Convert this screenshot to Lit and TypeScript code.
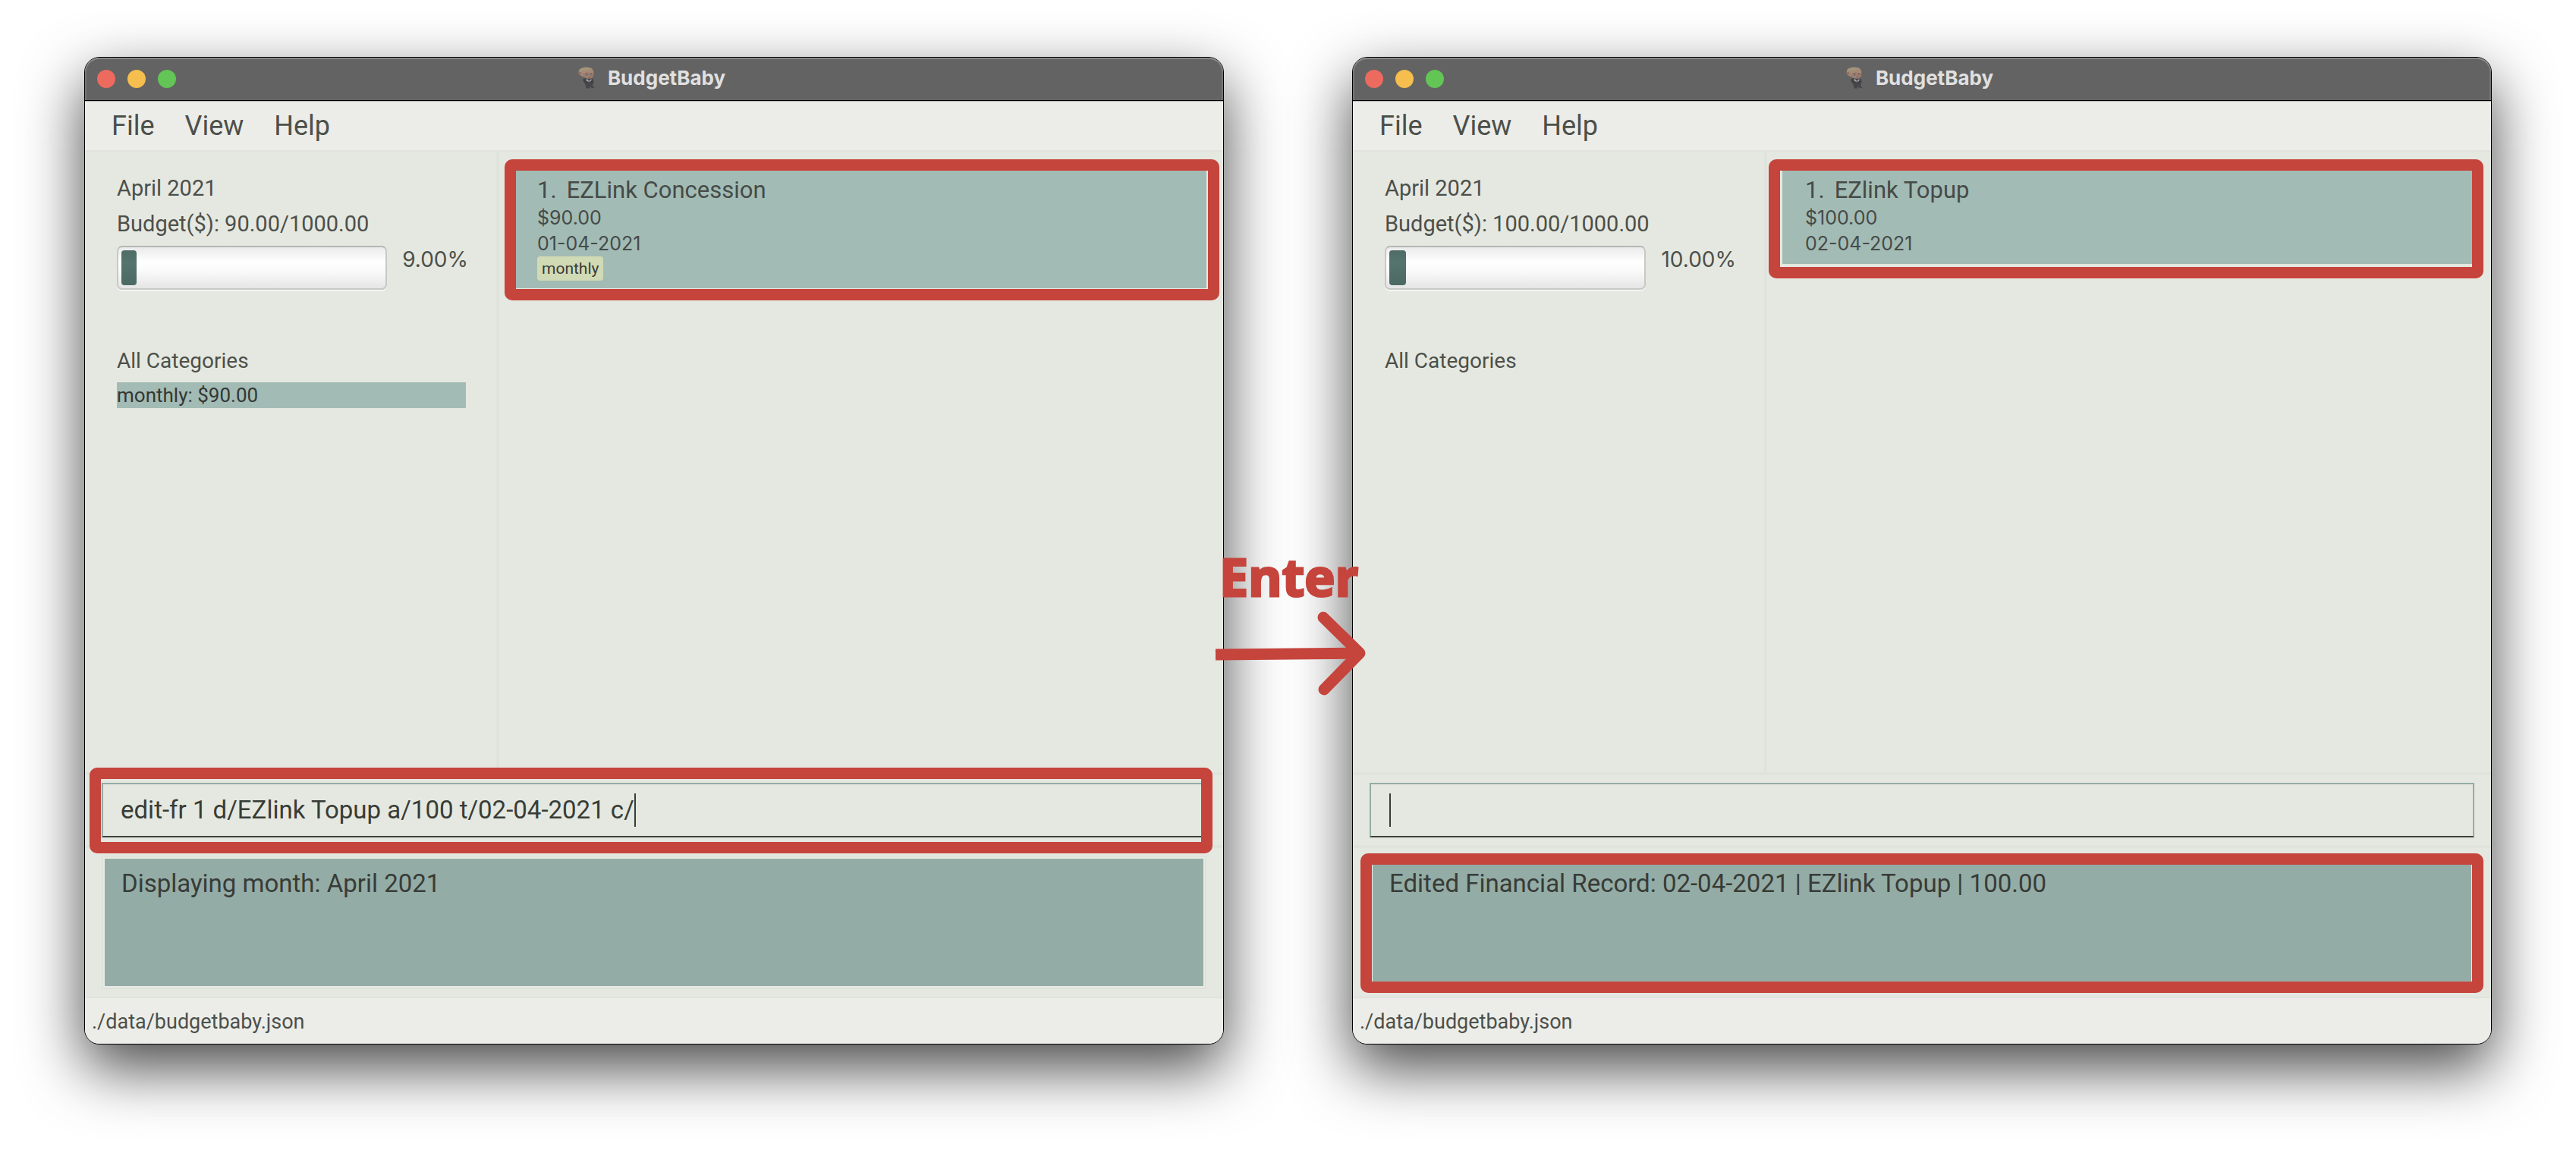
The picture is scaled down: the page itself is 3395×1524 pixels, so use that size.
import { LitElement, html, svg, css, nothing } from "lit";
import { customElement, property } from "lit/decorators.js";
import { classMap } from "lit/directives/class-map.js";
import { styleMap } from "lit/directives/style-map.js";

interface FinancialRecord {
  description: string;
  amount: string;
  date: string;
  tags: string[];
}

interface Snapshot {
  month: string;
  spent: number;
  budget: number;
  categories: { name: string; total: string }[];
  records: FinancialRecord[];
  command: string;
  result: string;
  file: string;
  marks: { record: "wide" | "shifted"; command: boolean; result: boolean };
}

const before: Snapshot = {
  month: "April 2021",
  spent: 90,
  budget: 1000,
  categories: [{ name: "monthly", total: "$90.00" }],
  records: [
    { description: "EZLink Concession", amount: "$90.00", date: "01-04-2021", tags: ["monthly"] },
  ],
  command: "edit-fr 1 d/EZlink Topup a/100 t/02-04-2021 c/",
  result: "Displaying month: April 2021",
  file: "./data/budgetbaby.json",
  marks: { record: "wide", command: true, result: false },
};

const after: Snapshot = {
  month: "April 2021",
  spent: 100,
  budget: 1000,
  categories: [],
  records: [{ description: "EZlink Topup", amount: "$100.00", date: "02-04-2021", tags: [] }],
  command: "",
  result: "Edited Financial Record: 02-04-2021 | EZlink Topup | 100.00",
  file: "./data/budgetbaby.json",
  marks: { record: "shifted", command: false, result: true },
};

const babyIcon = svg`
  <ellipse cx="10.5" cy="7" rx="10" ry="6.6" fill="#a58a78"/>
  <path d="M1 4.5C4 .5 14 -.8 19 3c-5 .6-8 2-12 2.400C4 5.800 2 7.500 1 9z" fill="#a3947a"/>
  <path d="M5 10c2 4.500 6 6.500 11 5.500 3-.6 4.500-3 4.300-6.500L12 7z" fill="#9c7d6e"/>
  <circle cx="2.500" cy="8.500" r="2" fill="#94715f"/>
  <path d="M9.500 9.800q1.500-.9 3 .1M15.800 9.300q1.300-.8 2.600 0" stroke="#5d4d49" stroke-width=".9" fill="none"/>
  <circle cx="11.200" cy="11" r=".9" fill="#6a7580"/>
  <circle cx="17.200" cy="10.600" r=".9" fill="#6a7580"/>
  <path d="M13.500 13.700q1.500.7 2.800 0" stroke="#7d544c" stroke-width=".8" fill="none"/>
  <path d="M6 16.500C8 14.500 11 15 13 16l5-.6c2.500.6 3 3.600 2 6.200l-1 3.400 3 3.500-4.500-.7-2.500-2.300.5 3h-5l-1.200-5.500L7 20z" fill="#46464a"/>
  <path d="M11 15.500l3.500 3.500 3-3.500-.4 3.500-3 2-3.400-2.200z" fill="#a5a5a3"/>
  <path d="M7.500 18.500c3 2 8 2.200 11.500.8" stroke="#37373b" stroke-width="1" fill="none"/>
`;

@customElement("budget-window")
export class BudgetWindow extends LitElement {
  @property({ attribute: false }) snapshot!: Snapshot;

  static styles = css`
    :host {
      --ink: #4c504b;
      --line: #e0e3dc;
      --mark: #c5443c;
      display: flex;
      flex: 1 1 0;
      min-width: 0;
      font-family: Roboto, "Liberation Sans", sans-serif;
      color: var(--ink);
    }
    * {
      box-sizing: border-box;
    }
    .window {
      flex: 1;
      min-width: 0;
      display: flex;
      flex-direction: column;
      border: 1px solid #000;
      border-radius: 20px;
      background: #e5e8e0;
      box-shadow: 0 31px 80px rgba(0, 0, 0, 0.72);
    }
    .titlebar {
      display: grid;
      grid-template-columns: 1fr auto 1fr;
      align-items: center;
      height: 57px;
      padding: 0 16px;
      background: #636363;
      border-bottom: 1px solid #000;
      border-radius: 19px 19px 0 0;
      box-shadow: inset 0 2px 0 #8a8a8a, inset 2px 0 0 #757575, inset -2px 0 0 #757575;
    }
    .lights {
      display: flex;
      gap: 16px;
    }
    .light {
      width: 24px;
      height: 24px;
      padding: 0;
      border: 0;
      border-radius: 50%;
    }
    .close { background: #ed6a5e; }
    .minimise { background: #f5be4f; }
    .zoom { background: #62c555; }
    .title {
      display: flex;
      align-items: center;
      gap: 13px;
      margin: 0;
      padding-right: 6px;
      color: #e0e0e0;
      font: 700 26px/54px Inter, "Liberation Sans", sans-serif;
      align-self: start;
    }
    .menu {
      display: flex;
      padding: 0 15px;
      background: #ecede8;
      border-top: 1px solid #b4b5b1;
      border-bottom: 2px solid var(--line);
    }
    .menu-item {
      padding: 0 20px;
      border: 0;
      background: none;
      color: inherit;
      font: 400 36px/64px Roboto, "Liberation Sans", sans-serif;
    }
    .main {
      flex: 1;
      display: grid;
      grid-template-columns: 542fr 958fr;
      min-height: 400px;
    }
    .sidebar {
      padding: 25px 40px 40px 42px;
    }
    .line {
      margin: 0;
      font-size: 29px;
      font-weight: 400;
      line-height: 47px;
      white-space: nowrap;
    }
    .budget {
      display: flex;
      align-items: flex-start;
      gap: 20px;
      margin: 5px -3px 70px 0;
    }
    .track {
      flex: 1;
      height: 58px;
      padding: 4px;
      border: 2px solid #c8c8c7;
      border-top-color: #b6b6b5;
      border-radius: 7px;
      background: linear-gradient(#eaeaea, #fff 35%, #f9f9f9 60%, #e5e5e5);
      box-shadow: 0 2px 0 #f4f5f2;
    }
    .fill {
      height: 100%;
      border-radius: 4px;
      background: linear-gradient(#4f6c66, #54746d 35%, #4c6963);
    }
    .percent {
      font: 400 28px/36px Inter, "Liberation Sans", sans-serif;
    }
    .heading {
      font-size: 28px;
    }
    .categories {
      list-style: none;
      margin: 5px 0 0;
      padding: 0;
    }
    .category {
      background: #a3bbb5;
      color: #333733;
      font-size: 26px;
      line-height: 34px;
    }
    .records {
      list-style: none;
      margin: 0;
      padding: 22px 22px 22px 20px;
      border-left: 4px solid var(--line);
    }
    .record {
      position: relative;
      padding: 10px 30px;
      background: #a3bbb5;
      color: #454b47;
    }
    .record-title {
      display: flex;
      gap: 13px;
      margin: 0;
      font-size: 31px;
      font-weight: 400;
      line-height: 38px;
    }
    .detail {
      margin: 0;
      font: 400 25px/34px Inter, "Liberation Sans", sans-serif;
    }
    .tags {
      display: flex;
      gap: 6px;
    }
    .tag {
      padding: 0 6px;
      border-radius: 4px;
      background: #d0dab4;
      color: #383c38;
      font-size: 21px;
      line-height: 32px;
    }
    .command {
      padding: 10px 22px;
      border-top: 4px solid var(--line);
      border-bottom: 4px solid var(--line);
    }
    .field {
      position: relative;
      display: flex;
      align-items: center;
      height: 72px;
      padding-left: 23px;
      border: 2px solid #94aca6;
      border-bottom-color: #3b403a;
      cursor: text;
    }
    .input {
      field-sizing: content;
      min-width: 0;
      max-width: 100%;
      padding: 0;
      border: 0;
      outline: 0;
      background: none;
      color: #383c37;
      font: 400 33px/44px Roboto, "Liberation Sans", sans-serif;
    }
    .caret {
      width: 2px;
      height: 44px;
      background: #383c37;
    }
    .result {
      padding: 10px 22px;
    }
    .result-box {
      position: relative;
      display: flex;
      padding: 2px;
      border: 2px solid var(--line);
      background: #e8ebe4;
    }
    .output {
      flex: 1;
      height: 168px;
      margin: 0;
      padding: 13px 22px;
      border: 0;
      outline: 0;
      resize: none;
      border-radius: 0;
      background: #94aca6;
      color: #383c37;
      font: 400 33px/40px Roboto, "Liberation Sans", sans-serif;
    }
    .status {
      padding: 2px 9px 0;
      border-top: 2px solid var(--line);
      border-radius: 0 0 19px 19px;
      background: #ecede8;
      font-size: 27px;
      line-height: 58px;
    }
    .mark {
      position: absolute;
      border: 15px solid var(--mark);
      border-radius: 10px;
      pointer-events: none;
    }
    .mark.wide { inset: -12px -17px -16px -13px; }
    .mark.shifted { inset: -12px -12px -19px -18px; }
    .mark.on-command { inset: -22px -10px -23px -18px; }
    .mark.on-result { inset: -5px -14px -7px -14px; }
  `;

  render() {
    const s = this.snapshot;
    const percent = (s.spent / s.budget) * 100;
    const fill = { width: `${(percent * 0.66).toFixed(2)}%` };
    return html`
      <section class="window">
        <header class="titlebar">
          <div class="lights">
            <button class="light close" aria-label="Close"></button>
            <button class="light minimise" aria-label="Minimise"></button>
            <button class="light zoom" aria-label="Zoom"></button>
          </div>
          <h1 class="title">
            <svg width="26" height="30" viewBox="0 0 26 30" aria-hidden="true">${babyIcon}</svg>
            BudgetBaby
          </h1>
        </header>
        <nav class="menu">
          ${["File", "View", "Help"].map((m) => html`<button class="menu-item">${m}</button>`)}
        </nav>
        <div class="main">
          <aside class="sidebar">
            <p class="line">${s.month}</p>
            <p class="line">Budget($): ${s.spent.toFixed(2)}/${s.budget.toFixed(2)}</p>
            <div class="budget">
              <div
                class="track"
                role="progressbar"
                aria-label="Budget used"
                aria-valuemin="0"
                aria-valuemax="100"
                aria-valuenow=${percent}
              >
                <div class="fill" style=${styleMap(fill)}></div>
              </div>
              <span class="percent">${percent.toFixed(2)}%</span>
            </div>
            <h2 class="line heading">All Categories</h2>
            <ul class="categories">
              ${s.categories.map((c) => html`<li class="category">${c.name}: ${c.total}</li>`)}
            </ul>
          </aside>
          <ol class="records">
            ${s.records.map(
              (r, i) => html`
                <li class="record">
                  <h3 class="record-title"><span>${i + 1}.</span><span>${r.description}</span></h3>
                  <p class="detail">${r.amount}</p>
                  <p class="detail">${r.date}</p>
                  <div class="tags">${r.tags.map((t) => html`<span class="tag">${t}</span>`)}</div>
                  <div class=${classMap({ mark: true, [s.marks.record]: true })}></div>
                </li>
              `,
            )}
          </ol>
        </div>
        <div class="command">
          <label class="field">
            <input class="input" type="text" aria-label="Command" .value=${s.command} />
            <span class="caret"></span>
            ${s.marks.command ? html`<span class="mark on-command"></span>` : nothing}
          </label>
        </div>
        <div class="result">
          <div class="result-box">
            <textarea class="output" aria-label="Result" readonly .value=${s.result}></textarea>
            ${s.marks.result ? html`<div class="mark on-result"></div>` : nothing}
          </div>
        </div>
        <footer class="status">${s.file}</footer>
      </section>
    `;
  }
}

@customElement("app-root")
export class AppRoot extends LitElement {
  static styles = css`
    :host {
      display: block;
      background: #fff;
    }
    .stage {
      box-sizing: border-box;
      display: flex;
      min-height: 100vh;
      padding: 75px 111px 147px;
      overflow: hidden;
    }
    .between {
      position: relative;
      flex: 0 0 169px;
      z-index: 1;
    }
    .step {
      position: absolute;
      top: 50%;
      left: -13px;
      display: flex;
      flex-direction: column;
      gap: 10px;
      color: #c5443c;
    }
    .key {
      padding-left: 7px;
      font: 700 68px/68px "Open Sans", "Liberation Sans", sans-serif;
      -webkit-text-stroke: 3px #c5443c;
      stroke-linejoin: round;
    }
    .arrow {
      display: block;
    }
  `;

  render() {
    return html`
      <main class="stage">
        <budget-window .snapshot=${before}></budget-window>
        <div class="between">
          <div class="step">
            <span class="key">Enter</span>
            <svg class="arrow" width="202" height="116" viewBox="0 0 202 116" aria-hidden="true">
              <g fill="none" stroke="currentColor" stroke-width="15" stroke-linejoin="round">
                <path d="M2 59L192 57" />
                <path d="M144 10L192 57L145 105" stroke-linecap="round" />
              </g>
            </svg>
          </div>
        </div>
        <budget-window .snapshot=${after}></budget-window>
      </main>
    `;
  }
}
